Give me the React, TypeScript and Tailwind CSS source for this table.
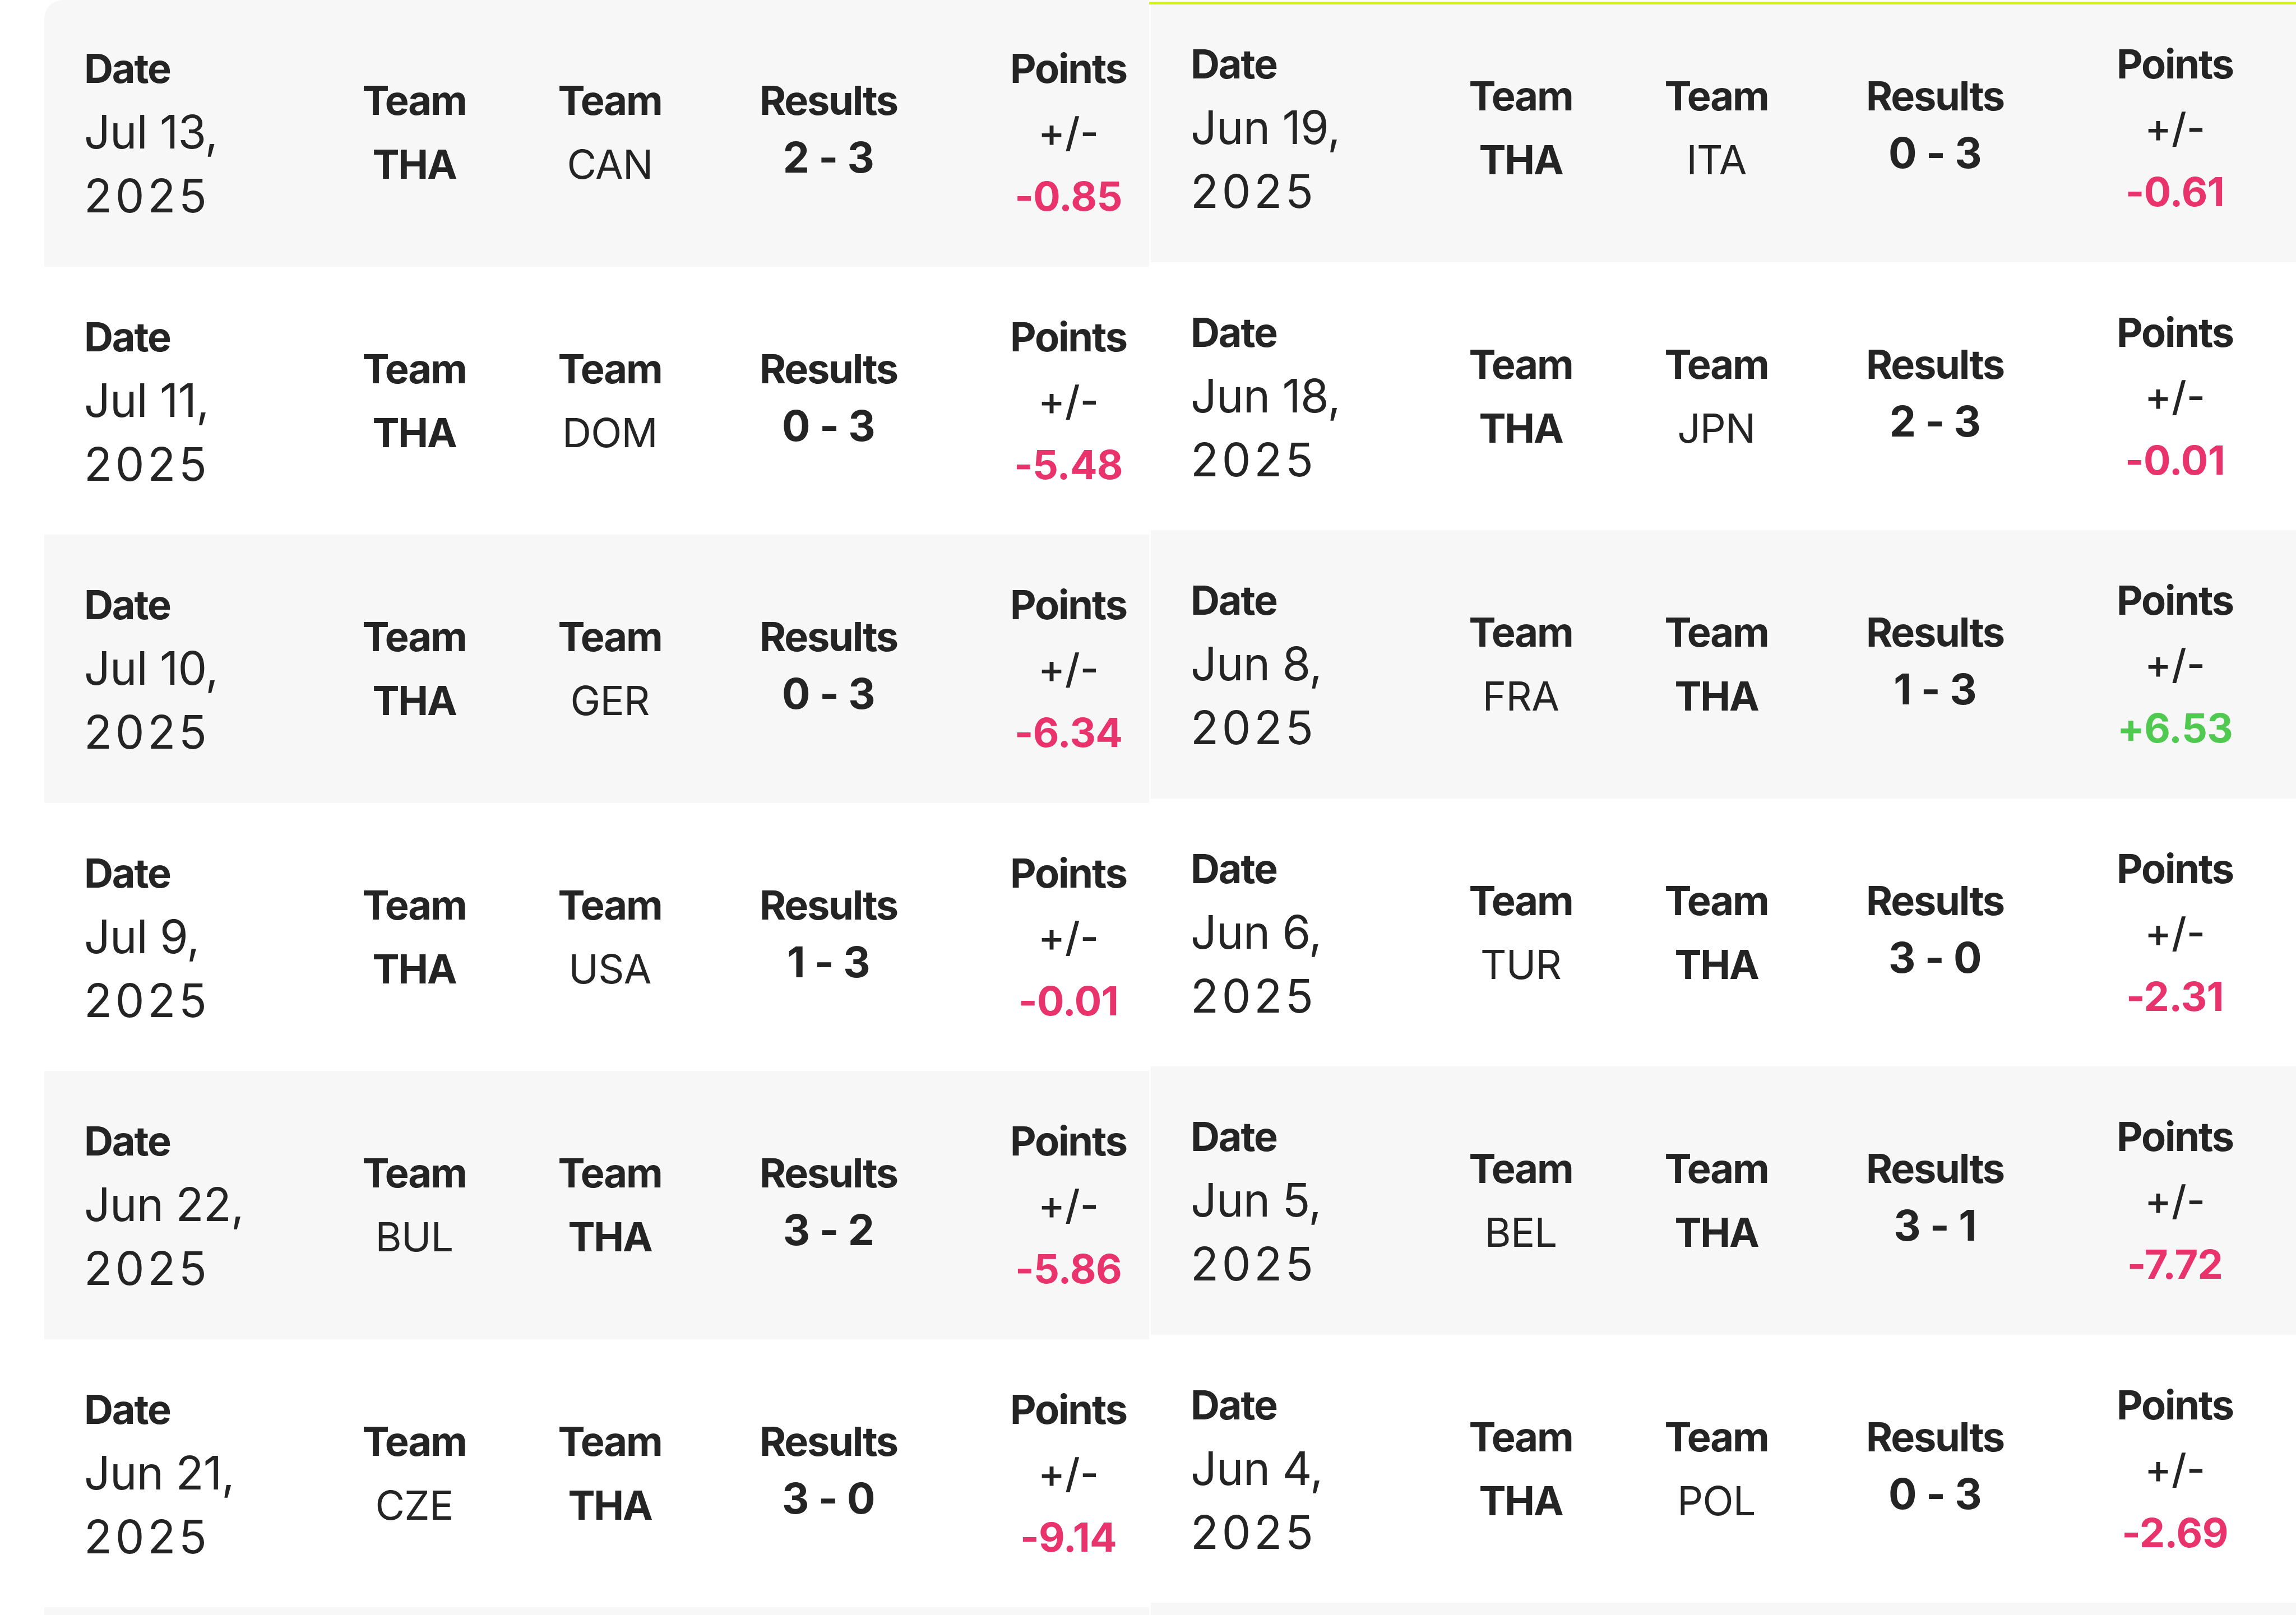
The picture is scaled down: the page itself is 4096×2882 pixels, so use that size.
import React from "react";

type Match = {
  date: string;
  t1: string;
  t2: string;
  res: string;
  pts: string;
};

const left: Match[] = [
  { date: "Jul 13, 2025", t1: "THA", t2: "CAN", res: "2 - 3", pts: "-0.85" },
  { date: "Jul 11, 2025", t1: "THA", t2: "DOM", res: "0 - 3", pts: "-5.48" },
  { date: "Jul 10, 2025", t1: "THA", t2: "GER", res: "0 - 3", pts: "-6.34" },
  { date: "Jul 9, 2025", t1: "THA", t2: "USA", res: "1 - 3", pts: "-0.01" },
  { date: "Jun 22, 2025", t1: "BUL", t2: "THA", res: "3 - 2", pts: "-5.86" },
  { date: "Jun 21, 2025", t1: "CZE", t2: "THA", res: "3 - 0", pts: "-9.14" },
];

const right: Match[] = [
  { date: "Jun 19, 2025", t1: "THA", t2: "ITA", res: "0 - 3", pts: "-0.61" },
  { date: "Jun 18, 2025", t1: "THA", t2: "JPN", res: "2 - 3", pts: "-0.01" },
  { date: "Jun 8, 2025", t1: "FRA", t2: "THA", res: "1 - 3", pts: "+6.53" },
  { date: "Jun 6, 2025", t1: "TUR", t2: "THA", res: "3 - 0", pts: "-2.31" },
  { date: "Jun 5, 2025", t1: "BEL", t2: "THA", res: "3 - 1", pts: "-7.72" },
  { date: "Jun 4, 2025", t1: "THA", t2: "POL", res: "0 - 3", pts: "-2.69" },
];

function Label({ children }: { children: React.ReactNode }) {
  return (
    <div className="text-[72px] font-bold leading-[114px] tracking-[-0.03em] whitespace-nowrap">
      {children}
    </div>
  );
}

function TeamValue({ name }: { name: string }) {
  const bold = name === "THA";
  return (
    <div
      className={`text-[72px] leading-[114px] whitespace-nowrap ${
        bold ? "font-bold tracking-[-0.03em]" : "font-normal tracking-[-0.01em]"
      }`}
    >
      {name}
    </div>
  );
}

function Row({ m, gray }: { m: Match; gray: boolean }) {
  const positive = m.pts.startsWith("+");
  const [day, year] = m.date.split(", ");
  return (
    <div
      className={`flex items-center h-[478.5px] pl-[71px] ${
        gray ? "bg-[#f7f7f7]" : "bg-white"
      }`}
    >
      <div className="w-[439px] shrink-0 flex flex-col items-start">
        <Label>Date</Label>
        <div className="text-[82px] leading-[114px] font-normal tracking-[-0.01em] whitespace-nowrap">
          {day},
        </div>
        <div className="text-[82px] leading-[114px] font-normal tracking-[0.07em] whitespace-nowrap">
          {year}
        </div>
      </div>
      <div className="w-[300px] shrink-0 flex flex-col items-center">
        <Label>Team</Label>
        <TeamValue name={m.t1} />
      </div>
      <div className="w-[398px] shrink-0 flex flex-col items-center">
        <Label>Team</Label>
        <TeamValue name={m.t2} />
      </div>
      <div className="w-[382px] shrink-0 flex flex-col items-center">
        <Label>Results</Label>
        <div className="text-[75px] font-bold leading-[90px] mb-[24px] whitespace-nowrap tracking-[-0.01em]">
          {m.res}
        </div>
      </div>
      <div className="ml-[93px] w-[288px] shrink-0 flex flex-col items-center">
        <Label>Points</Label>
        <div className="text-[72px] font-medium leading-[114px]">+/-</div>
        <div
          className={`text-[72px] font-bold leading-[114px] tracking-[-0.01em] whitespace-nowrap ${
            positive ? "text-[#4fc94f]" : "text-[#e8336d]"
          }`}
        >
          {m.pts}
        </div>
      </div>
    </div>
  );
}

function EmptyRow({ gray }: { gray: boolean }) {
  return <div className={`h-[478.5px] ${gray ? "bg-[#f7f7f7]" : "bg-white"}`} />;
}

export default function App() {
  return (
    <div className="w-[4096px] h-[2882px] overflow-hidden bg-white flex text-[#242424] font-[Inter,sans-serif]">
      <div className="ml-[79px] w-[1971px] shrink-0 h-full overflow-hidden rounded-tl-[33px]">
        <div className="-mt-[3px] flex flex-col">
          {left.map((m, i) => (
            <Row key={i} m={m} gray={i % 2 === 0} />
          ))}
          <EmptyRow gray={true} />
        </div>
      </div>
      <div className="ml-[3px] flex-1 h-full flex flex-col pt-[3px]">
        <div className="h-[5px] -ml-[3px] bg-[#d3f20c] shrink-0" />
        <div className="flex-1 overflow-hidden">
          <div className="-mt-[19px] flex flex-col">
            {right.map((m, i) => (
              <Row key={i} m={m} gray={i % 2 === 0} />
            ))}
            <EmptyRow gray={true} />
          </div>
        </div>
      </div>
    </div>
  );
}
